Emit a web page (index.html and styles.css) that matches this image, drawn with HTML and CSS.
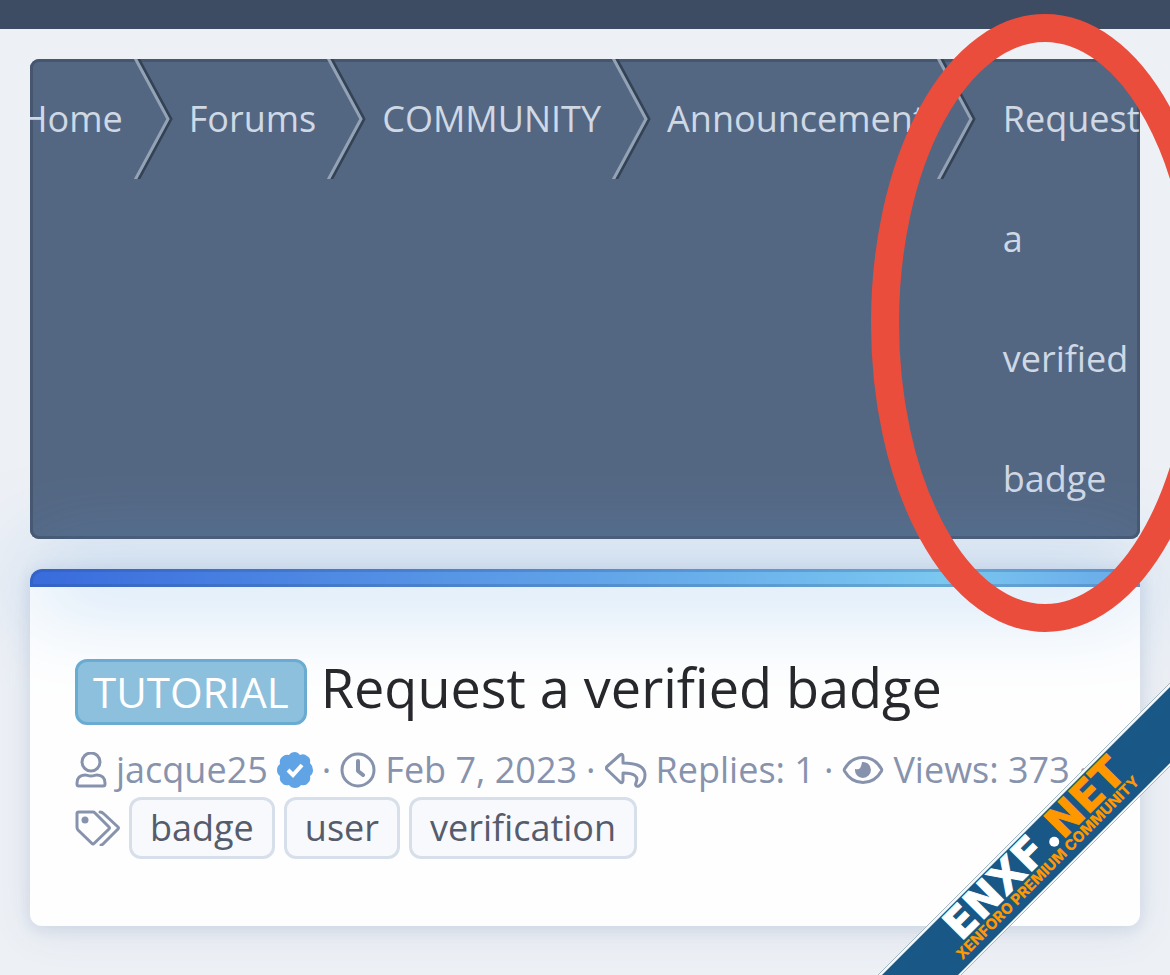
FILE: index.html
```html
<!DOCTYPE html>
<html lang="en">
<head>
<meta charset="utf-8">
<title>Request a verified badge</title>
<link rel="stylesheet" href="styles.css">
</head>
<body>
<svg class="symbols" aria-hidden="true">
  <symbol id="chevron" viewBox="0 0 39 120">
    <polyline class="chevron-dark" points="3,-3 37,60 3,123"/>
    <polyline class="chevron-light" points="0,-3 34,60 0,123"/>
  </symbol>
</svg>
<header class="topbar"></header>
<main class="page">
  <nav class="crumbs" aria-label="Breadcrumb">
    <ol class="crumb-list">
      <li class="crumb"><a href="#">Home</a><svg class="chevron"><use href="#chevron"/></svg></li>
      <li class="crumb"><a href="#">Forums</a><svg class="chevron"><use href="#chevron"/></svg></li>
      <li class="crumb"><a href="#">COMMUNITY</a><svg class="chevron"><use href="#chevron"/></svg></li>
      <li class="crumb"><a href="#">Announcement</a><svg class="chevron"><use href="#chevron"/></svg></li>
      <li class="crumb crumb-last"><a href="#">Request a verified badge</a></li>
    </ol>
  </nav>
  <article class="card">
    <div class="strip"></div>
    <div class="card-body">
      <h1 class="title"><span class="label">TUTORIAL</span><span>Request a verified badge</span></h1>
      <ul class="meta">
        <li>
          <svg class="icon-user" viewBox="0 0 32 36"><circle cx="16" cy="10" r="9"/><path d="M2 31C2 26 5 23 10 23C12 23 13 24 16 24C19 24 20 23 22 23C27 23 30 26 30 31V32Q30 34 28 34H4Q2 34 2 32Z"/></svg>
          <a href="#">jacque25</a>
          <svg class="icon-check" viewBox="0 0 36 36"><path class="seal" d="M18 0Q21 0 23 3Q27 1 30 4Q34 6 33 11Q36 14 36 18Q36 22 33 24Q34 29 31 31Q29 34 24 33Q22 36 18 36Q14 36 12 33Q7 34 5 31Q2 29 3 24Q0 22 0 18Q0 14 3 12Q2 7 5 5Q8 2 12 3Q14 0 18 0Z"/><path class="tick" d="M11 18L16 23L25 13"/></svg>
        </li>
        <li>·</li>
        <li><svg class="icon-clock" viewBox="0 0 36 36"><circle cx="18" cy="18" r="16"/><path class="hands" d="M18 9V19L23 23"/></svg><a href="#">Feb 7, 2023</a></li>
        <li>·</li>
        <li><svg class="icon-reply" viewBox="0 0 42 36"><path d="M2.500 14L15 3Q18 1 18 5V11C31 11 40 14 40 23C40 29 37 32 34 34C31 35 30 33 31 31C34 24 29 21 18 21V28Q18 32 15 30L2.500 18Q0 16 2.500 14Z"/></svg><span>Replies: 1</span></li>
        <li>·</li>
        <li><svg class="icon-eye" viewBox="0 0 42 36"><path d="M2.500 17Q9 5.500 21 5.500T39.500 17Q40 18 39.500 19Q33 30.500 21 30.500T2.500 19Q2 18 2.500 17Z"/><path class="fill" d="M20 10A8 8 0 1 1 13 17Q19 19 20 10Z"/></svg><span>Views: 373</span></li>
        <li>·</li>
      </ul>
      <div class="tags">
        <svg class="icon-tags" viewBox="0 0 45 36"><path d="M2 3.500Q2 2 4 2H18Q19 2 20 3L34 17Q35 18 34 19L19 33.500Q18 34.500 17 33.500L3 20Q2 19 2 17Z"/><circle class="fill" cx="10" cy="10" r="3.500"/><path d="M25 2Q27 2 29 4L43 17Q44 18 43 19L28 34Q27 35 26 35"/></svg>
        <a class="tag" href="#">badge</a>
        <a class="tag" href="#">user</a>
        <a class="tag" href="#">verification</a>
      </div>
    </div>
  </article>
</main>
<svg class="ring" viewBox="0 0 348 620" aria-hidden="true"><ellipse cx="174" cy="310" rx="160" ry="295"/></svg>
<svg class="ribbon" viewBox="0 0 292 292" role="img" aria-label="ENXF.NET">
  <path class="ribbon-edge" d="M0 292L292 0V83L83 292Z"/>
  <path class="ribbon-line" d="M0 292L292 0M83 292L292 83"/>
  <path class="ribbon-fill" d="M4 292L292 4V80L80 292Z"/>
  <g transform="translate(85 257) rotate(-45)">
    <text class="ribbon-name" x="-3" y="0">ENXF</text>
    <circle class="ribbon-dot" cx="134" cy="-5" r="5"/>
    <text class="ribbon-name ribbon-net" x="141" y="0">NET</text>
    <text class="ribbon-sub" x="-15" y="14">XENFORO PREMIUM COMMUNITY</text>
  </g>
</svg>
</body>
</html>
```
FILE: styles.css
```css
* { box-sizing: border-box; }
body {
  position: relative;
  margin: 0;
  min-height: 100vh;
  overflow: hidden;
  background: #edf0f5;
  color: #27282c;
  font-family: "Open Sans", "Noto Sans", sans-serif;
  font-size: 36px;
}
a { color: inherit; text-decoration: none; }
ol, ul { margin: 0; padding: 0; list-style: none; }
.symbols { position: absolute; width: 0; height: 0; }
.topbar { height: 29px; background: #3e4c63; }
.page { padding: 30px; }

.crumbs {
  overflow: hidden;
  border-radius: 9px;
  background: #546782;
  box-shadow: inset 0 0 0 3px #46566e;
  color: #cfd8e5;
  line-height: 120px;
}
.crumb-list { display: flex; margin-left: -9px; }
.crumb { display: flex; flex: none; gap: 11px; padding-right: 16px; }
.crumb-last { flex: 0 1 150px; padding: 0 0 0 11px; }
.chevron { width: 39px; height: 120px; }
.chevron-dark, .chevron-light { fill: none; stroke-width: 3; }
.chevron-dark { stroke: #344256; }
.chevron-light { stroke: #94a2b6; }

.card {
  margin-top: 30px;
  border-radius: 12px;
  background: #fefefe;
  box-shadow: 0 6px 42px rgba(80, 120, 160, .1), 0 3px 15px rgba(80, 115, 175, .16);
}
.strip {
  position: relative;
  height: 18px;
  border: 3px solid rgba(40, 75, 130, .25);
  border-right: 0;
  border-radius: 12px 0 0 0;
  background: linear-gradient(90deg, #396bdc, #7ac7f0 82%, #68a9e8) border-box;
  box-shadow: 0 0 90px #5ba0e4;
}
.card-body { position: relative; padding: 67px 45px; }
.title {
  display: flex;
  align-items: baseline;
  gap: 14px;
  margin: 0;
  font-size: 54px;
  font-weight: 400;
  line-height: 66px;
}
.label {
  padding: 0 15px;
  border: 3px solid #6aabd2;
  border-radius: 12px;
  background: #8cc0dc;
  color: #fff;
  font-size: 42px;
  line-height: 60px;
}
.meta {
  display: flex;
  gap: 9px;
  margin-top: 18px;
  color: #8793ad;
  line-height: 54px;
  white-space: nowrap;
}
.meta li { display: flex; align-items: center; gap: 9px; }
.meta svg, .icon-tags {
  flex: none;
  height: 36px;
  fill: none;
  stroke: #8793ad;
  stroke-width: 3;
  stroke-linejoin: round;
  stroke-linecap: round;
}
.icon-user { width: 32px; }
.icon-check, .icon-clock { width: 36px; }
.icon-reply, .icon-eye { width: 42px; }
.icon-tags { width: 45px; }
.meta .hands { stroke-width: 4; }
.meta .fill, .tags .fill { fill: #8793ad; stroke: none; }
.meta .seal { fill: #60a4e6; stroke: none; }
.meta .tick { stroke: #fff; stroke-width: 4; stroke-linecap: butt; stroke-linejoin: miter; }
.tags { display: flex; align-items: center; gap: 9px; }
.tag {
  padding: 0 18px;
  border: 3px solid #d7e0ea;
  border-radius: 12px;
  background: #f8f9fc;
  color: #555c6b;
  line-height: 56px;
}

.ring { position: absolute; top: 13px; right: -49px; width: 348px; height: 620px; }
.ring ellipse { fill: none; stroke: #ea4d3c; stroke-width: 28; }
.ribbon { position: absolute; right: 0; bottom: 0; width: 292px; height: 292px; }
.ribbon-edge { fill: #f4f6f7; }
.ribbon-line { fill: none; stroke: #a9b9c2; stroke-width: 1; }
.ribbon-fill { fill: #195886; }
.ribbon-name { fill: #fff; stroke: #fff; stroke-width: 1; font: 700 42px "DejaVu Sans", sans-serif; }
.ribbon-dot { fill: #fff; }
.ribbon-net { fill: #ff9800; stroke: #ff9800; }
.ribbon-sub { fill: #ff9800; font: 800 15px Inter, sans-serif; }
```
